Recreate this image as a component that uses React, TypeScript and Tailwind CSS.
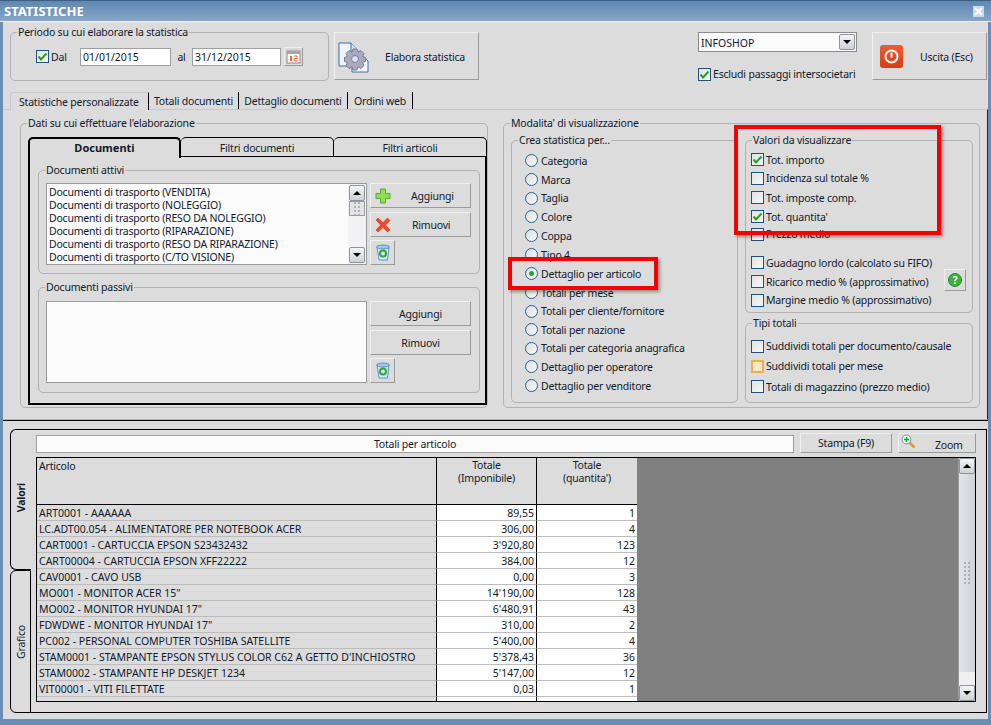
import type { ReactNode } from 'react'

const docs = ['VENDITA', 'NOLEGGIO', 'RESO DA NOLEGGIO', 'RIPARAZIONE', 'RESO DA RIPARAZIONE', 'C/TO VISIONE']

const radios: [string, string][] = [
  ['Categoria', 'h-[19px]'],
  ['Marca', 'h-[19px]'],
  ['Taglia', 'h-[18px]'],
  ['Colore', 'h-[19px]'],
  ['Coppa', 'h-[19px]'],
  ['Tipo 4', 'h-[19px]'],
  ['Dettaglio per articolo', 'h-[19px]'],
  ['Totali per mese', 'h-[19px]'],
  ['Totali per cliente/fornitore', 'h-[18px]'],
  ['Totali per nazione', 'h-[19px]'],
  ['Totali per categoria anagrafica', 'h-[18px]'],
  ['Dettaglio per operatore', 'h-[19px]'],
  ['Dettaglio per venditore', 'h-[19px]'],
]

const rows = [
  ['ART0001 - AAAAAA', '89,55', '1'],
  ['LC.ADT00.054 - ALIMENTATORE PER NOTEBOOK ACER', '306,00', '4'],
  ['CART0001 - CARTUCCIA EPSON S23432432', "3'920,80", '123'],
  ['CART00004 - CARTUCCIA EPSON XFF22222', '384,00', '12'],
  ['CAV0001 - CAVO USB', '0,00', '3'],
  ['MO001 - MONITOR ACER 15"', "14'190,00", '128'],
  ['MO002 - MONITOR HYUNDAI 17"', "6'480,91", '43'],
  ['FDWDWE - MONITOR HYUNDAI 17"', '310,00', '2'],
  ['PC002 - PERSONAL COMPUTER TOSHIBA SATELLITE', "5'400,00", '4'],
  ['STAM0001 - STAMPANTE EPSON STYLUS COLOR C62 A GETTO D\'INCHIOSTRO', "5'378,43", '36'],
  ['STAM0002 - STAMPANTE HP DESKJET 1234', "5'147,00", '12'],
  ['VIT00001 - VITI FILETTATE', '0,03', '1'],
]

function Check({ on, hot }: { on?: boolean; hot?: boolean }) {
  return (
    <span
      className={`w-[13px] h-[13px] shrink-0 flex items-center justify-center ${
        hot ? 'border-2 border-[#efb04a] bg-[#f3e6cc]' : 'border border-[#1c5180] bg-gradient-to-br from-[#e2e2e2] to-[#f8f8f8]'
      }`}
    >
      {on && (
        <svg width="11" height="11" viewBox="0 0 11 11">
          <path d="M1.500 5.500 L4 8.500 L9.500 2.500" fill="none" stroke="#21a121" strokeWidth="2" />
        </svg>
      )}
    </span>
  )
}

function CheckRow({ label, on, hot, className }: { label: string; on?: boolean; hot?: boolean; className: string }) {
  return (
    <div className={`flex items-center gap-[2px] whitespace-nowrap ${className}`}>
      <Check on={on} hot={hot} />
      <span>{label}</span>
    </div>
  )
}

function Radio({ on }: { on?: boolean }) {
  return (
    <span className="w-[13px] h-[13px] shrink-0 rounded-full border border-[#2c5f8a] bg-gradient-to-br from-[#dedede] to-[#f8f8f8] flex items-center justify-center">
      {on && <span className="w-[5px] h-[5px] rounded-full bg-[#22a83a]" />}
    </span>
  )
}

// padding goes on an inner div, a fieldset's padding would push the legend too
function Group({ title, className, pad, children }: { title: string; className: string; pad?: string; children?: ReactNode }) {
  return (
    <fieldset className={`border border-[#b2b2b2] rounded-[5px] shrink-0 ${className}`}>
      <legend className="ml-[6px] px-[1px] h-[14px] leading-[14px] whitespace-nowrap">{title}</legend>
      <div className={pad}>{children}</div>
    </fieldset>
  )
}

function Btn({ className, children }: { className: string; children?: ReactNode }) {
  return (
    <div
      className={`border border-t-[#f0f0f0] border-l-[#f0f0f0] border-r-[#9a9a9a] border-b-[#9a9a9a] bg-[#dcdcdc] flex items-center shrink-0 ${className}`}
    >
      {children}
    </div>
  )
}

function Arrow({ up }: { up?: boolean }) {
  return (
    <span
      className={`w-0 h-0 border-l-[4px] border-r-[4px] border-l-transparent border-r-transparent ${
        up ? 'border-b-[4px] border-b-black' : 'border-t-[4px] border-t-black'
      }`}
    />
  )
}

function ScrollBtn({ up }: { up?: boolean }) {
  return (
    <div className="h-[16px] w-[16px] shrink-0 rounded-[2px] border border-[#8f939c] bg-gradient-to-b from-[#f5f5f7] to-[#cfd1d8] flex items-center justify-center">
      <Arrow up={up} />
    </div>
  )
}

function Grip() {
  return (
    <div className="grid grid-cols-2 gap-x-[2px] gap-y-[2px]">
      {Array.from({ length: 12 }).map((_, i) => (
        <span key={i} className="w-[2px] h-[2px] bg-[#b0b0b6]" />
      ))}
    </div>
  )
}

function Trash() {
  return (
    <svg width="16" height="17" viewBox="0 0 16 17">
      <path d="M2 3 L14 3 L12.500 16 L4 16 Z" fill="#d5e6f7" stroke="#5f93c8" />
      <ellipse cx="8" cy="3" rx="6.500" ry="2" fill="#9fc4ea" stroke="#5f93c8" />
      <circle cx="8" cy="9.500" r="3" fill="none" stroke="#2fa53a" strokeWidth="2" />
    </svg>
  )
}

function Plus() {
  return (
    <svg width="16" height="16" viewBox="0 0 16 16">
      <path d="M5.500 1 H10.500 V5.500 H15 V10.500 H10.500 V15 H5.500 V10.500 H1 V5.500 H5.500 Z" fill="#8fdc55" stroke="#5aa832" />
    </svg>
  )
}

function Cross() {
  return (
    <svg width="16" height="16" viewBox="0 0 16 16">
      <path d="M3 1 L8 5.500 L12.500 1 L15 3.500 L10.500 8 L15 13 L12.500 15 L8 10.500 L3 15 L1 13 L5.500 8 L1 3 Z" fill="#ee4a2a" stroke="#c9381b" strokeWidth="0.600" />
    </svg>
  )
}

function DocGear() {
  return (
    <svg width="32" height="32" viewBox="0 0 32 32">
      <path d="M1 2 H13 L21 11 V25 H1 Z" fill="#eef4fb" stroke="#3f6fa8" />
      <path d="M14 12 H21 L30 20 V31 H14 Z" fill="#f4f8fc" stroke="#3f6fa8" />
      <path d="M13 2 V11 H21" fill="#cfe0f2" stroke="#3f6fa8" />
      <path
        d="M15 8 h4 l1 3 3 -1.500 3 3 -1.500 3 3 1 v4 l-3 1 1.500 3 -3 3 -3 -1.500 -1 3 h-4 l-1 -3 -3 1.500 -3 -3 1.500 -3 -3 -1 v-4 l3 -1 -1.500 -3 3 -3 3 1.500 z"
        fill="#a9aac0"
        stroke="#7b7d96"
      />
      <circle cx="17" cy="18" r="3.500" fill="#dfe0ea" stroke="#7b7d96" />
    </svg>
  )
}

function Calendar() {
  return (
    <svg width="15" height="15" viewBox="0 0 15 15">
      <rect x="1" y="2" width="13" height="12" fill="#fbfbfb" stroke="#8a8a8a" />
      <rect x="1" y="2" width="13" height="3" fill="#a8a8a8" />
      <rect x="4" y="7" width="2" height="5" fill="#ee6a1a" />
      <path d="M8 7 H11 V9.500 H8 V12 H11.500" fill="none" stroke="#ee6a1a" />
    </svg>
  )
}

function Magnifier() {
  return (
    <svg width="15" height="15" viewBox="0 0 15 15">
      <path d="M8.500 8.500 L13.500 13.500" stroke="#e8923c" strokeWidth="2.500" />
      <circle cx="5.500" cy="5.500" r="4.500" fill="#e4f2f6" stroke="#6f9aa8" />
      <path d="M5.500 3 V8 M3 5.500 H8" stroke="#1ea02c" strokeWidth="1.300" />
    </svg>
  )
}

function Mark({ className }: { className: string }) {
  return <div className={`absolute border-[4px] border-[#f50000] shadow-[2px_2px_3px_rgba(0,0,0,0.35)] ${className}`} />
}

export default function App() {
  return (
    <div
      className="relative w-[991px] h-[725px] overflow-hidden bg-[#6b8db3] px-[3px] text-[10.5px] leading-[14px] tracking-[-0.2px] text-[#101a2c]"
      style={{ fontFamily: '"Noto Sans", "Liberation Sans", sans-serif' }}
    >
      {/* Title bar */}
      <div className="-mx-[3px] h-[22px] flex items-center justify-between pl-[4px] pr-[7px] border-t border-t-[#3e5f82] border-b border-b-[#eef2f6] bg-gradient-to-b from-[#5f87b0] to-[#86a6c8]">
        <span className="font-bold text-[13px] tracking-normal text-white">STATISTICHE</span>
        <span className="w-[11px] h-[11px] flex items-center justify-center bg-[#c9d6e4]">
          <svg width="9" height="9" viewBox="0 0 9 9">
            <path d="M1 1 L8 8 M8 1 L1 8" stroke="#fff" strokeWidth="2" />
          </svg>
        </span>
      </div>

      <div className="bg-[#dcdcdc] h-[697px] flex flex-col">
        {/* Header controls */}
        <div className="h-[68px] shrink-0 flex items-start pl-[7px] pt-[3px]">
          <Group title="Periodo su cui elaborare la statistica" className="w-[319px] h-[56px]">
            <div className="flex items-center h-[19px] mt-[8px] pl-[25px]">
              <Check on />
              <span className="ml-[2px] w-[29px]">Dal</span>
              <div className="w-[91px] h-[18px] border border-[#a0a0a0] bg-white pl-[2px] leading-[16px] tracking-normal">01/01/2015</div>
              <span className="w-[21px] text-center">al</span>
              <div className="w-[89px] h-[18px] border border-[#a0a0a0] bg-white pl-[2px] leading-[16px] tracking-normal">31/12/2015</div>
              <Btn className="w-[19px] h-[19px] ml-[3px] justify-center">
                <Calendar />
              </Btn>
            </div>
          </Group>
          <Btn className="w-[145px] h-[48px] ml-[5px] mt-[7px] pl-[3px] pt-[1px]">
            <DocGear />
            <span className="ml-[15px]">Elabora statistica</span>
          </Btn>
          <div className="w-[159px] ml-[219px] mt-[7px]">
            <div className="h-[20px] border border-[#8a8a8a] bg-[#fbfbfb] pl-[2px] pr-[1px] flex items-center justify-between">
              <span className="pt-[1px] tracking-normal">INFOSHOP</span>
              <ScrollBtn />
            </div>
            <div className="mt-[15px]">
              <CheckRow label="Escludi passaggi intersocietari" on className="h-[14px]" />
            </div>
          </div>
          <Btn className="w-[115px] h-[48px] ml-[15px] mt-[7px] pl-[7px] pt-[1px]">
            <span className="w-[23px] h-[23px] rounded-[3px] bg-gradient-to-b from-[#f05c32] to-[#d63d14] flex items-center justify-center">
              <svg width="15" height="15" viewBox="0 0 15 15">
                <circle cx="7.500" cy="7.500" r="6" fill="none" stroke="#fff" strokeWidth="2" />
                <path d="M7.500 3.500 V8.500" stroke="#fff" strokeWidth="2" />
              </svg>
            </span>
            <span className="ml-[17px]">Uscita (Esc)</span>
          </Btn>
        </div>

        {/* Main tabs */}
        <div className="h-[19px] shrink-0 flex items-end pl-[7px] whitespace-nowrap">
          <div className="w-[139px] h-[18px] -mb-[1px] z-10 bg-[#dcdcdc] border-r border-r-black pl-[8px] leading-[19px] rounded-tl-[3px] border-t border-l border-t-[#c8c8c8] border-l-[#c8c8c8]">
            Statistiche personalizzate
          </div>
          <div className="w-[90px] h-[17px] border-r border-r-black text-center leading-[19px]">Totali documenti</div>
          <div className="w-[109px] h-[17px] border-r border-r-black text-center leading-[19px]">Dettaglio documenti</div>
          <div className="w-[65px] h-[17px] border-r border-r-black text-center leading-[19px]">Ordini web</div>
        </div>

        {/* Tab page */}
        <div className="h-[311px] shrink-0 border-t border-t-[#c8c8c8] border-b border-b-[#b4b4b4] border-r border-r-[#222] flex items-start pl-[17px] pt-[6px]">
          <Group title="Dati su cui effettuare l'elaborazione" className="w-[467px] h-[292px]" pad="pl-[7px]">
            <div className="w-[459px] flex h-[20px] mt-[7px] items-end">
              <div className="w-[153px] h-[21px] -mb-[1px] z-10 rounded-t-[5px] border-2 border-black border-b-0 bg-[#dcdcdc] font-bold text-center leading-[18px] text-[11px] tracking-normal">
                Documenti
              </div>
              <div className="w-[153px] h-[20px] rounded-t-[5px] border-t border-r border-black border-b text-center leading-[20px]">Filtri documenti</div>
              <div className="w-[153px] h-[20px] rounded-t-[5px] border-t border-r border-black border-b text-center leading-[20px]">Filtri articoli</div>
            </div>
            <div className="w-[459px] h-[248px] border-2 border-t-0 border-black pl-[8px] pt-[6px]">
              <Group title="Documenti attivi" className="w-[442px] h-[111px]" pad="pl-[7px]">
                <div className="flex mt-[6px]">
                  <div className="w-[321px] h-[82px] border border-[#9a9a9a] bg-[#fbfbfb] flex">
                    <div className="flex-1 pl-[2px] pt-[2px] leading-[13px]">
                      {docs.map((d) => (
                        <div key={d} className="whitespace-nowrap">Documenti di trasporto ({d})</div>
                      ))}
                    </div>
                    <div className="w-[18px] flex flex-col items-center pt-[1px] pb-[1px] bg-[#f2f2f4]">
                      <ScrollBtn up />
                      <div className="h-[15px] w-[16px] border border-[#9a9ca4] bg-[#e4e4e8] flex justify-center items-center overflow-hidden"><Grip /></div>
                      <div className="flex-1" />
                      <ScrollBtn />
                    </div>
                  </div>
                  <div className="ml-[3px] flex flex-col gap-[4px]">
                    <Btn className="w-[101px] h-[25px] pl-[4px]">
                      <Plus />
                      <span className="ml-[20px]">Aggiungi</span>
                    </Btn>
                    <Btn className="w-[101px] h-[25px] pl-[4px]">
                      <Cross />
                      <span className="ml-[21px]">Rimuovi</span>
                    </Btn>
                    <Btn className="w-[25px] h-[25px] -mt-[1px] justify-center">
                      <Trash />
                    </Btn>
                  </div>
                </div>
              </Group>
              <Group title="Documenti passivi" className="w-[442px] h-[113px] mt-[6px]" pad="pl-[7px]">
                <div className="flex mt-[7px]">
                  <div className="w-[321px] h-[82px] border border-[#9a9a9a] bg-[#fbfbfb]" />
                  <div className="ml-[3px] flex flex-col gap-[4px]">
                    <Btn className="w-[101px] h-[25px] justify-center">Aggiungi</Btn>
                    <Btn className="w-[101px] h-[25px] justify-center">Rimuovi</Btn>
                    <Btn className="w-[25px] h-[25px] -mt-[1px] justify-center">
                      <Trash />
                    </Btn>
                  </div>
                </div>
              </Group>
            </div>
          </Group>

          <Group title="Modalita' di visualizzazione" className="w-[477px] h-[292px] ml-[15px]" pad="pl-[7px]">
            <div className="flex gap-[7px] mt-[3px]">
              <Group title="Crea statistica per..." className="w-[227px] h-[270px]" pad="pl-[13px] pt-[4px]">
                {radios.map(([label, h]) => (
                  <div key={label} className={`flex items-center gap-[3px] whitespace-nowrap ${h}`}>
                    <Radio on={label === 'Dettaglio per articolo'} />
                    <span>{label}</span>
                  </div>
                ))}
              </Group>
              <div>
                <Group title="Valori da visualizzare" className="w-[228px] h-[180px]" pad="pl-[5px] pr-[5px] pt-[3px]">
                  <CheckRow label="Tot. importo" on className="h-[19px]" />
                  <CheckRow label="Incidenza sul totale %" className="h-[18px]" />
                  <CheckRow label="Tot. imposte comp." className="h-[21px]" />
                  <CheckRow label="Tot. quantita'" on className="h-[17px]" />
                  <CheckRow label="Prezzo medio" className="h-[18px]" />
                  <div className="h-[10px]" />
                  <CheckRow label="Guadagno lordo (calcolato su FIFO)" className="h-[19px]" />
                  <div className="flex items-center justify-between h-[19px]">
                    <CheckRow label="Ricarico medio % (approssimativo)" className="h-[19px]" />
                    <Btn className="w-[22px] h-[22px] justify-center -mt-[3px] mr-[1px]">
                      <span className="w-[14px] h-[14px] rounded-full bg-[#3db03d] border border-[#2a8a2a] text-white text-[10px] leading-[12px] font-bold text-center">?</span>
                    </Btn>
                  </div>
                  <CheckRow label="Margine medio % (approssimativo)" className="h-[18px]" />
                </Group>
                <Group title="Tipi totali" className="w-[228px] h-[87px] mt-[3px]" pad="pl-[5px] pt-[6px]">
                  <CheckRow label="Suddividi totali per documento/causale" className="h-[20px]" />
                  <CheckRow label="Suddividi totali per mese" hot className="h-[20px]" />
                  <CheckRow label="Totali di magazzino (prezzo medio)" className="h-[21px]" />
                </Group>
              </div>
            </div>
          </Group>
        </div>

        <div className="h-[1px] shrink-0 bg-black" />

        {/* Results panel */}
        <div className="flex-1 pl-[7px] pr-[1px] pt-[8px]">
          <div className="flex h-[284px]">
            <div className="w-[21px] shrink-0 flex flex-col">
              <div className="h-[141px] rounded-l-[6px] border border-r-0 border-black bg-[#dcdcdc] flex items-center justify-center pb-[4px]">
                <span className="font-bold [writing-mode:vertical-rl] rotate-180">Valori</span>
              </div>
              <div className="h-[143px] rounded-l-[6px] border border-black bg-[#dcdcdc] flex items-center justify-center">
                <span className="[writing-mode:vertical-rl] rotate-180">Grafico</span>
              </div>
            </div>
            <div className="w-[956px] border border-l-0 border-black pl-[5px] pr-[10px] pt-[3px]">
              <div className="flex items-start">
                <div className="w-[758px] h-[18px] mt-[2px] border border-[#a0a0a0] bg-[#fbfbfb] text-center leading-[17px]">Totali per articolo</div>
                <Btn className="w-[92px] h-[20px] ml-[6px] justify-center">Stampa (F9)</Btn>
                <Btn className="w-[78px] h-[20px] ml-[6px] pl-[2px] items-start">
                  <Magnifier />
                  <span className="ml-[19px] mt-[4px]">Zoom</span>
                </Btn>
              </div>
              <div className="mt-[4px] h-[245px] w-[940px] border border-black flex overflow-hidden">
                <div className="w-[600px] shrink-0">
                  <div className="flex h-[47px] border-b border-b-black">
                    <div className="w-[400px] border-r border-r-black pl-[2px] pt-[1px]">Articolo</div>
                    <div className="w-[100px] border-r border-r-black text-center pt-[1px] leading-[13px]">
                      Totale
                      <br />
                      (Imponibile)
                    </div>
                    <div className="w-[100px] text-center pt-[1px] leading-[13px]">
                      Totale
                      <br />
                      (quantita')
                    </div>
                  </div>
                  {rows.map((r) => (
                    <div key={r[0]} className="flex h-[16px] leading-[17px] tracking-normal">
                      <div className="w-[400px] border-r border-r-black border-b border-b-[#bcbcbc] pl-[2px] whitespace-nowrap">{r[0]}</div>
                      <div className="w-[100px] border-r border-r-black border-b border-b-[#bcbcbc] bg-white text-right pr-[2px]">{r[1]}</div>
                      <div className="w-[100px] border-b border-b-[#bcbcbc] bg-white text-right pr-[2px]">{r[2]}</div>
                    </div>
                  ))}
                  <div className="flex h-[8px] leading-[17px] tracking-normal">
                    <div className="w-[400px] border-r border-r-black" />
                    <div className="w-[100px] border-r border-r-black bg-white text-right pr-[2px]">41'606,72</div>
                    <div className="w-[100px] bg-white text-right pr-[2px]">369,00</div>
                  </div>
                </div>
                <div className="flex-1 bg-[#808080]" />
                <div className="w-[17px] shrink-0 border-l border-l-[#9a9a9a] flex flex-col bg-gradient-to-r from-[#e4e5ea] to-[#d0d2d9]">
                  <ScrollBtn up />
                  <div className="flex-1 flex items-center justify-center">
                    <Grip />
                  </div>
                  <div className="h-[13px] bg-[#f0f0f0]" />
                  <ScrollBtn />
                </div>
              </div>
            </div>
          </div>
        </div>
      </div>

      {/* Red highlight marks drawn on top of the form */}
      <Mark className="left-[734px] top-[125px] w-[207px] h-[110px]" />
      <Mark className="left-[508px] top-[257px] w-[150px] h-[33px]" />
    </div>
  )
}
